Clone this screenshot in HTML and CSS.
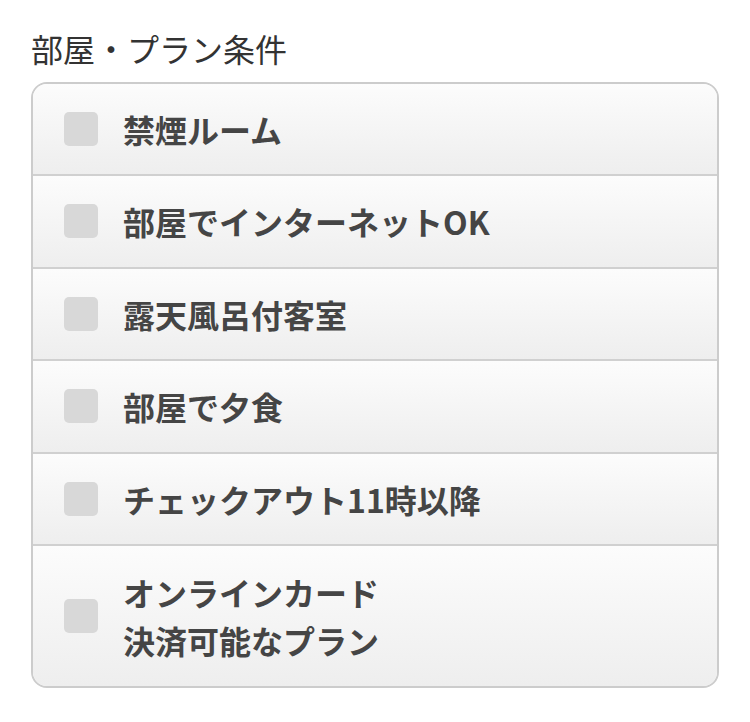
FILE: index.html
```html
<!DOCTYPE html>
<html lang="ja">
<head>
  <meta charset="UTF-8" />
  <title>部屋・プラン条件</title>
  <link rel="stylesheet" href="styles.css">
</head>
<body>

  <div class="section">
    <h2 class="section-title">部屋・プラン条件</h2>

    <ul class="check-list">
      <li class="check-item">
        <span class="check-box"></span>
        <span class="check-label">禁煙ルーム</span>
      </li>
      <li class="check-item">
        <span class="check-box"></span>
        <span class="check-label">部屋でインターネットOK</span>
      </li>
      <li class="check-item">
        <span class="check-box"></span>
        <span class="check-label">露天風呂付客室</span>
      </li>
      <li class="check-item">
        <span class="check-box"></span>
        <span class="check-label">部屋で夕食</span>
      </li>
      <li class="check-item">
        <span class="check-box"></span>
        <span class="check-label">チェックアウト11時以降</span>
      </li>
      <li class="check-item">
        <span class="check-box"></span>
        <span class="check-label">オンラインカード<br>決済可能なプラン</span>
      </li>
    </ul>
  </div>

</body>
</html>
```

FILE: styles.css
```css
* { margin: 0; padding: 0; box-sizing: border-box; }
body {
  background: #ffffff;
  font-family: "Noto Sans CJK JP", "Noto Sans", sans-serif;
}

.section { padding: 24px 31px 0; }
.section-title {
  font-size: 32px; line-height: 48px; font-weight: 400; color: #333;
  margin-bottom: 9.5px;
}

.check-list {
  list-style: none; border: 2px solid #cccccc; border-radius: 16px;
  overflow: hidden;
}
.check-item {
  display: flex; align-items: center; padding: 21.25px 0 21.25px 31px;
  background: linear-gradient(#fcfcfc, #eeeeee);
  border-bottom: 2px solid #d0d0d0;
}
.check-item:last-child { border-bottom: none; padding-top: 22px; padding-bottom: 22px; }

.check-box {
  width: 34px; height: 34px; flex-shrink: 0; border-radius: 5px;
  background: #d8d8d8; margin-right: 25px;
}
.check-label {
  font-size: 32px; line-height: 48px; font-weight: 700; color: #454545;
}
```
